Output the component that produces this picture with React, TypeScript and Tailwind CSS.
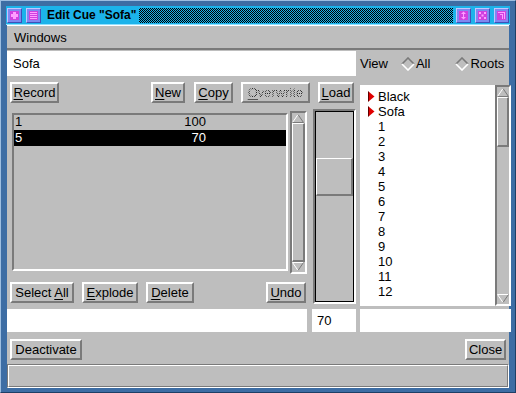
import React from "react";

function Mn({ children }: { children: React.ReactNode }) {
  return <span className="underline underline-offset-[2px] decoration-1">{children}</span>;
}

function Btn({ className, children }: { className: string; children: React.ReactNode }) {
  return (
    <div
      className={
        "h-[21px] shrink-0 flex items-center justify-center border-2 border-t-white border-l-white border-r-[#7a7a7a] border-b-[#7a7a7a] text-[13px] leading-none text-black " +
        className
      }
    >
      <span className="whitespace-pre">{children}</span>
    </div>
  );
}

function ArrowUp() {
  return (
    <svg width="12" height="9" viewBox="0 0 12 9" className="block">
      <polygon points="6,0.5 11.5,8.5 0.5,8.5" fill="#bebebe" />
      <polyline points="0.5,8.5 6,0.5" stroke="#ffffff" strokeWidth="1" fill="none" />
      <polyline points="6,0.5 11.5,8.5 0.5,8.5" stroke="#7a7a7a" strokeWidth="1" fill="none" />
    </svg>
  );
}

function ArrowDown() {
  return (
    <svg width="12" height="9" viewBox="0 0 12 9" className="block">
      <polygon points="0.5,0.5 11.5,0.5 6,8.5" fill="#bebebe" />
      <polyline points="0.5,0.5 11.5,0.5" stroke="#ffffff" strokeWidth="1" fill="none" />
      <polyline points="0.5,0.5 6,8.5" stroke="#ffffff" strokeWidth="1" fill="none" />
      <polyline points="11.5,0.5 6,8.5" stroke="#7a7a7a" strokeWidth="1" fill="none" />
    </svg>
  );
}

function Diamond() {
  return (
    <svg width="14" height="14" viewBox="0 0 14 14" className="block shrink-0">
      <polygon points="7,1 13,7 7,13 1,7" fill="#bebebe" />
      <polyline points="1,7 7,1 13,7" stroke="#7a7a7a" strokeWidth="1.6" fill="none" />
      <polyline points="1,7 7,13 13,7" stroke="#ffffff" strokeWidth="1.6" fill="none" />
    </svg>
  );
}

function RedMark() {
  return (
    <svg width="7" height="11" viewBox="0 0 7 11" className="block shrink-0">
      <polygon points="0.5,0.5 6.5,5.5 0.5,10.5" fill="#e00000" />
      <line x1="0.5" y1="0.5" x2="0.5" y2="10.5" stroke="#600000" strokeWidth="1" />
    </svg>
  );
}

function TitleIcon({ kind }: { kind: string }) {
  return (
    <div className="w-[15px] h-[15px] shrink-0 bg-[#8088f0] border border-t-[#c0c8ff] border-l-[#c0c8ff] border-r-[#4050b8] border-b-[#4050b8] flex items-center justify-center">
      <svg width="9" height="9" viewBox="0 0 9 9" className="block">
        <rect x="0" y="0" width="9" height="9" fill="#d040e0" />
        {kind === "plus" && (
          <>
            <rect x="3" y="1" width="3" height="7" fill="#ff9cff" />
            <rect x="1" y="3" width="7" height="3" fill="#ff9cff" />
          </>
        )}
        {kind === "menu" && (
          <>
            <rect x="1" y="1" width="7" height="1" fill="#ff9cff" />
            <rect x="1" y="3" width="7" height="1" fill="#ff9cff" />
            <rect x="1" y="5" width="7" height="1" fill="#ff9cff" />
            <rect x="1" y="7" width="7" height="1" fill="#ff9cff" />
          </>
        )}
        {kind === "updown" && (
          <>
            <rect x="4" y="1" width="1" height="7" fill="#ff9cff" />
            <polygon points="4.5,0.5 7,3 2,3" fill="#ff9cff" />
            <polygon points="4.5,8.5 7,6 2,6" fill="#ff9cff" />
          </>
        )}
        {kind === "x" && (
          <>
            <rect x="1" y="1" width="2" height="2" fill="#ff9cff" />
            <rect x="6" y="1" width="2" height="2" fill="#ff9cff" />
            <rect x="3.5" y="3.5" width="2" height="2" fill="#ff9cff" />
            <rect x="1" y="6" width="2" height="2" fill="#ff9cff" />
            <rect x="6" y="6" width="2" height="2" fill="#ff9cff" />
          </>
        )}
        {kind === "corner" && (
          <>
            <rect x="1" y="1" width="7" height="1" fill="#ff9cff" />
            <rect x="7" y="1" width="1" height="7" fill="#ff9cff" />
            <rect x="3" y="3" width="3" height="1" fill="#ff9cff" />
            <rect x="5" y="3" width="1" height="5" fill="#ff9cff" />
          </>
        )}
      </svg>
    </div>
  );
}

function VScroll({ className, thumbClass }: { className: string; thumbClass: string }) {
  return (
    <div
      className={
        "shrink-0 flex flex-col border-2 border-t-[#7a7a7a] border-l-[#7a7a7a] border-r-white border-b-white bg-[#bebebe] " +
        className
      }
    >
      <div className="h-[9px] shrink-0 mt-[1px]">
        <ArrowUp />
      </div>
      <div className="flex-1 flex flex-col">
        <div
          className={
            "border-t border-l border-r-2 border-b-2 border-t-white border-l-white border-r-[#7a7a7a] border-b-[#7a7a7a] " +
            thumbClass
          }
        />
      </div>
      <div className="h-[9px] shrink-0 mb-[1px]">
        <ArrowDown />
      </div>
    </div>
  );
}

const cues = ["Black", "Sofa", "1", "2", "3", "4", "5", "6", "7", "8", "9", "10", "11", "12"];

export default function App() {
  return (
    <div className="w-[516px] h-[393px] bg-[#3d6da4] flex flex-col px-[6px] pt-[5px] pb-[6px] font-['Liberation_Sans',Arial,sans-serif] text-black border-t border-l border-t-[#9cbde0] border-l-[#9cbde0] border-r border-b border-r-[#1e3f66] border-b-[#1e3f66] relative">
      {/* Title bar */}
      <div className="h-[19px] shrink-0 flex items-center bg-[#1cb3ea] border-b border-b-[#8fe0ff] mx-[-1px]">
        <div className="ml-[1px]">
          <TitleIcon kind="plus" />
        </div>
        <div className="ml-[4px]">
          <TitleIcon kind="menu" />
        </div>
        <div className="ml-[6px] text-[12px] font-bold leading-none whitespace-nowrap">Edit Cue "Sofa"</div>
        <div className="flex-1 h-[15px] ml-[3px] bg-[repeating-conic-gradient(#000000_0_25%,#1cb3ea_0_50%)] bg-size-[2px_2px]" />
        <div className="flex items-center gap-[4px] pl-[3px] pr-[1px]">
          <TitleIcon kind="updown" />
          <TitleIcon kind="x" />
          <TitleIcon kind="corner" />
        </div>
      </div>

      {/* Main panel */}
      <div className="flex-1 bg-[#bebebe] flex flex-col text-[13px]">
        {/* Menu bar */}
        <div className="h-[25px] shrink-0 border-t border-t-white border-b-2 border-b-[#7a7a7a] flex items-center pl-[7px]">
          <span className="leading-none">Windows</span>
        </div>

        <div className="flex gap-[4px]">
          {/* Left part */}
          <div className="w-[349px] shrink-0 flex flex-col">
            <div className="mt-[1px] h-[25px] bg-white flex items-center pl-[6px]">Sofa</div>
            <div className="mt-[6px] h-[21px] flex">
              <Btn className="ml-[3px] w-[49px]">
                <Mn>R</Mn>ecord
              </Btn>
              <Btn className="ml-[92px] w-[34px]">
                <Mn>N</Mn>ew
              </Btn>
              <Btn className="ml-[9px] w-[39px]">
                <Mn>C</Mn>opy
              </Btn>
              <Btn className="ml-[8px] w-[69px]">
                <span className="bg-[repeating-conic-gradient(#2a2a2a_0_25%,transparent_0_50%)] bg-size-[2px_2px] bg-clip-text text-transparent">
                  <span className="underline underline-offset-[2px] decoration-1 decoration-[#555555]">O</span>verwrite
                </span>
              </Btn>
              <Btn className="ml-[8px] w-[36px]">
                <Mn>L</Mn>oad
              </Btn>
            </div>
            <div className="mt-[6px] h-[195px] flex">
              <div className="w-[300px] shrink-0 flex flex-col">
                <div className="mt-[2px] h-[163px] flex">
                  <div className="ml-[5px] mt-[2px] w-[276px] h-[158px] border-2 border-t-[#7a7a7a] border-l-[#7a7a7a] border-r-white border-b-white flex flex-col">
                    <div className="h-[15px] flex items-center leading-none pb-[2px]">
                      <span className="w-[192px] flex justify-between pl-[1px]">
                        <span>1</span>
                        <span>100</span>
                      </span>
                    </div>
                    <div className="h-[16px] flex items-center leading-none bg-black text-white pb-[1px]">
                      <span className="w-[192px] flex justify-between pl-[1px]">
                        <span>5</span>
                        <span>70</span>
                      </span>
                    </div>
                  </div>
                  <VScroll className="ml-[2px] w-[17px] h-[163px]" thumbClass="flex-1 mx-0" />
                </div>
                <div className="mt-[8px] h-[21px] flex">
                  <Btn className="ml-[3px] w-[64px]">
                    {"Select "}
                    <Mn>A</Mn>ll
                  </Btn>
                  <Btn className="ml-[8px] w-[56px]">
                    <Mn>E</Mn>xplode
                  </Btn>
                  <Btn className="ml-[8px] w-[48px]">
                    <Mn>D</Mn>elete
                  </Btn>
                  <Btn className="ml-auto mr-[1px] w-[40px]">
                    <Mn>U</Mn>ndo
                  </Btn>
                </div>
              </div>
              {/* Scale */}
              <div className="ml-[6px] w-[43px] h-[195px] border-2 border-t-[#7a7a7a] border-l-[#7a7a7a] border-r-white border-b-white">
                <div className="w-full h-full border border-black flex flex-col">
                  <div className="h-[46px] shrink-0" />
                  <div className="h-[38px] mx-0 border-t border-l border-r-2 border-b-2 border-t-white border-l-white border-r-[#7a7a7a] border-b-[#7a7a7a]" />
                </div>
              </div>
            </div>
            <div className="mt-[5px] h-[23px] flex">
              <div className="w-[300px] bg-white" />
              <div className="ml-[5px] w-[44px] bg-white flex items-center pl-[5px]">70</div>
            </div>
          </div>

          {/* Right part */}
          <div className="w-[151px] shrink-0 flex flex-col">
            <div className="mt-[1px] h-[25px] flex items-center">
              <span className="leading-none">View</span>
              <span className="ml-[13px]">
                <Diamond />
              </span>
              <span className="ml-[1px] leading-none">All</span>
              <span className="ml-[25px]">
                <Diamond />
              </span>
              <span className="ml-[1px] leading-none">Roots</span>
            </div>
            <div className="mt-[9px] h-[221px] flex">
              <div className="w-[135px] bg-white flex flex-col pt-[4px]">
                {cues.map((c, i) => (
                  <div key={c} className="h-[15px] flex items-center leading-none">
                    <span className="w-[18px] pl-[8px] flex items-center">{i < 2 ? <RedMark /> : null}</span>
                    <span>{c}</span>
                  </div>
                ))}
              </div>
              <VScroll className="w-[16px] h-[221px]" thumbClass="h-[50px]" />
            </div>
            <div className="mt-[3px] h-[23px] bg-white" />
          </div>
        </div>

        {/* Bottom buttons */}
        <div className="mt-[7px] h-[21px] flex">
          <Btn className="ml-[3px] w-[72px]">Deactivate</Btn>
          <Btn className="ml-auto mr-[3px] w-[41px]">Close</Btn>
        </div>

        {/* Status bar */}
        <div className="mt-[4px] h-[24px] border border-t-[#7a7a7a] border-l-[#7a7a7a] border-r-white border-b-white">
          <div className="w-full h-full border border-t-white border-l-white border-r-[#7a7a7a] border-b-[#7a7a7a]" />
        </div>
      </div>
    </div>
  );
}
